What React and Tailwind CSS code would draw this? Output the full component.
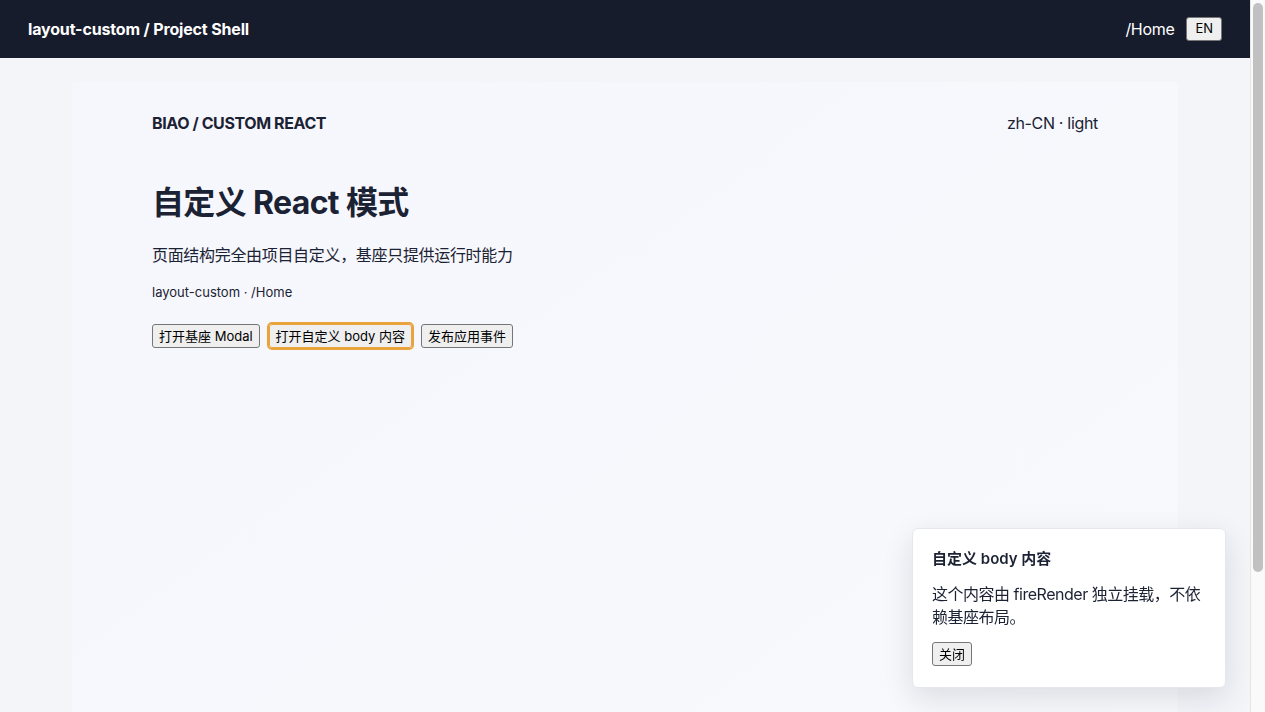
import React from "react"

const font = { fontFamily: 'Inter, "Noto Sans CJK SC", sans-serif' }

function NativeButton({ children, focused }) {
    return (
        <button
            className={
                "h-6 px-1.5 text-[13px] leading-none text-black bg-[#efefef] border border-[#767676] rounded-[3px] " +
                (focused ? "outline-2 outline-[#e8a33d] border-[#e8a33d]" : "")
            }
        >
            {children}
        </button>
    )
}

// classic (non-overlay) scrollbar as it shows in the shot
function ScrollTrack() {
    return (
        <div className="w-[15px] shrink-0 h-screen bg-[#fafafa] border-l border-[#e6e6e6] px-[2px] pt-[3px]">
            <div className="h-[569px] w-full rounded-full bg-[#c1c1c1]" />
        </div>
    )
}

export default function App() {
    return (
        <div style={font} className="flex h-screen overflow-hidden bg-[#f3f5f9] text-[#1b2233]">
            <div className="flex-1 min-w-0 h-screen overflow-hidden">
                {/* Top bar */}
                <header className="h-[58px] bg-[#171c2d] px-7 flex items-center justify-between">
                    <div className="text-white font-bold text-base tracking-[-0.01em]">layout-custom / Project Shell</div>
                    <div className="flex items-center gap-3">
                        <span className="text-white text-base tracking-[-0.02em]">/Home</span>
                        <button className="h-6 px-2 text-[13px] text-black bg-[#efefef] border border-[#767676] rounded-[3px]">EN</button>
                    </div>
                </header>

                {/* Page */}
                <main className="px-[72px] pt-6">
                    <section className="min-h-[808px] rounded-sm bg-gradient-to-br from-[#f5f7fd] to-[#f8f9fc] px-20 pt-[29px]">
                        <div className="flex items-center justify-between">
                            <div className="font-bold text-base tracking-tight">BIAO / CUSTOM REACT</div>
                            <div className="text-base tracking-[-0.02em]">zh-CN · light</div>
                        </div>

                        <h1 className="mt-12 text-[32px] leading-10 font-bold tracking-[-0.02em]">自定义 React 模式</h1>
                        <p className="mt-5 text-base leading-6 tracking-[-0.02em]">页面结构完全由项目自定义，基座只提供运行时能力</p>
                        <p className="mt-[15px] text-[13px] leading-5">layout-custom · /Home</p>

                        <div className="mt-[22px] flex items-center gap-[9px]">
                            <NativeButton>打开基座 Modal</NativeButton>
                            <NativeButton focused>打开自定义 body 内容</NativeButton>
                            <NativeButton>发布应用事件</NativeButton>
                        </div>
                    </section>
                </main>
            </div>

            <ScrollTrack />

            {/* Floating body content */}
            <div className="fixed right-[39px] bottom-6 w-[314px] bg-white rounded-md border border-[#e4e7ec] shadow-[0_10px_30px_rgba(15,23,42,0.12)] px-[19px] pt-5 pb-[21px]">
                <div className="text-[15px] leading-5 font-semibold">自定义 body 内容</div>
                <p className="mt-3.5 text-base leading-[23px] tracking-[-0.03em]">这个内容由 fireRender 独立挂载，不依赖基座布局。</p>
                <div className="mt-3">
                    <NativeButton>关闭</NativeButton>
                </div>
            </div>
        </div>
    )
}
